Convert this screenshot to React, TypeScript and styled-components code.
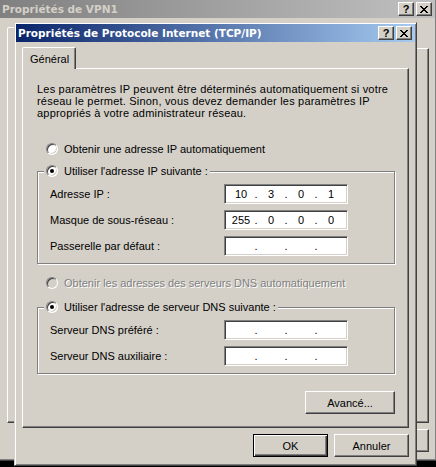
import styled, { createGlobalStyle } from 'styled-components';

const GlobalStyle = createGlobalStyle`
  html, body {
    margin: 0;
    padding: 0;
    background: #000000;
  }
  body {
    font-family: "Liberation Sans", Arial, sans-serif;
    font-size: 11px;
    color: #000000;
  }
`;

const CloseGlyph = () => (
  <svg width="8" height="7" viewBox="0 0 8 7" shapeRendering="crispEdges">
    <path
      fill="#000"
      d="M0 0h2v1H0zM6 0h2v1H6zM1 1h2v1H1zM5 1h2v1H5zM2 2h4v1H2zM3 3h2v1H3zM2 4h4v1H2zM1 5h2v1H1zM5 5h2v1H5zM0 6h2v1H0zM6 6h2v1H6z"
    />
  </svg>
);

const IpField = ({ value }: { value?: string[] }) => {
  const parts = value ?? ['', '', '', ''];
  return (
    <Sunken>
      {parts.map((p, i) => (
        <Octets key={i}>
          <Octet>{p}</Octet>
          {i < 3 && <Dot>.</Dot>}
        </Octets>
      ))}
    </Sunken>
  );
};

const App = () => {
  return (
    <>
      <GlobalStyle />
      <Desktop>
        <Window $left={-2} $top={-2} $width={439} $height={463}>
          <TitleBar $active={false}>
            <TitleText>Propriétés de VPN1</TitleText>
            <CaptionButtons>
              <CaptionButton>?</CaptionButton>
              <CaptionButton>
                <CloseGlyph />
              </CaptionButton>
            </CaptionButtons>
          </TitleBar>
          <Body $top={9} $left={7}>
            <TabStrip>
              <Tab>Général</Tab>
            </TabStrip>
            <Panel />
            <ButtonRow>
              <Button $width={75} $default>
                OK
              </Button>
              <Button $width={75}>Annuler</Button>
            </ButtonRow>
          </Body>
        </Window>

        <Window $left={14} $top={22} $width={403} $height={444}>
          <TitleBar $active>
            <TitleText>Propriétés de Protocole Internet (TCP/IP)</TitleText>
            <CaptionButtons>
              <CaptionButton>?</CaptionButton>
              <CaptionButton>
                <CloseGlyph />
              </CaptionButton>
            </CaptionButtons>
          </TitleBar>
          <Body $top={5} $left={6}>
            <TabStrip>
              <Tab>Général</Tab>
            </TabStrip>
            <Panel>
              <Paragraph>
                Les paramètres IP peuvent être déterminés automatiquement si votre
                <br />
                réseau le permet. Sinon, vous devez demander les paramètres IP
                <br />
                appropriés à votre administrateur réseau.
              </Paragraph>

              <RadioRow $gap={23}>
                <Radio />
                <span>Obtenir une adresse IP automatiquement</span>
              </RadioRow>

              <GroupBox $gap={8}>
                <Legend>
                  <RadioRow $gap={0} $inLegend>
                    <Radio $checked />
                    <span>Utiliser l'adresse IP suivante :</span>
                  </RadioRow>
                </Legend>
                <FieldGrid>
                  <FieldLabel>Adresse IP :</FieldLabel>
                  <IpField value={['10', '3', '0', '1']} />
                  <FieldLabel>Masque de sous-réseau :</FieldLabel>
                  <IpField value={['255', '0', '0', '0']} />
                  <FieldLabel>Passerelle par défaut :</FieldLabel>
                  <IpField />
                </FieldGrid>
              </GroupBox>

              <RadioRow $gap={12} $disabled>
                <Radio $disabled />
                <span>Obtenir les adresses des serveurs DNS automatiquement</span>
              </RadioRow>

              <GroupBox $gap={10}>
                <Legend>
                  <RadioRow $gap={0} $inLegend>
                    <Radio $checked />
                    <span>Utiliser l'adresse de serveur DNS suivante :</span>
                  </RadioRow>
                </Legend>
                <FieldGrid>
                  <FieldLabel>Serveur DNS préféré :</FieldLabel>
                  <IpField />
                  <FieldLabel>Serveur DNS auxiliaire :</FieldLabel>
                  <IpField />
                </FieldGrid>
              </GroupBox>

              <AdvancedButton $width={90}>Avancé...</AdvancedButton>
            </Panel>
            <ButtonRow>
              <Button $width={75} $default>
                OK
              </Button>
              <Button $width={75}>Annuler</Button>
            </ButtonRow>
          </Body>
        </Window>
      </Desktop>
    </>
  );
};

export default App;

// Styled Components
const Desktop = styled.div`
  position: relative;
  width: 436px;
  height: 467px;
  overflow: hidden;
  background: #000000;
`;

const Window = styled.div<{ $left: number; $top: number; $width: number; $height: number }>`
  position: absolute;
  z-index: 0;
  left: ${(p) => p.$left}px;
  top: ${(p) => p.$top}px;
  width: ${(p) => p.$width}px;
  height: ${(p) => p.$height}px;
  box-sizing: border-box;
  display: flex;
  flex-direction: column;
  padding: 1px;
  background: #d4d0c8;
  border: 1px solid;
  border-color: #d4d0c8 #404040 #404040 #d4d0c8;
  box-shadow: inset 1px 1px #ffffff, inset -1px -1px #808080;
`;

const TitleBar = styled.div<{ $active: boolean }>`
  display: flex;
  align-items: center;
  height: 18px;
  flex-shrink: 0;
  padding: 0 3px 0 2px;
  background: ${(p) =>
    p.$active
      ? 'linear-gradient(to right, #0a246a, #a6caf0)'
      : 'linear-gradient(to right, #808080, #c0c0c0)'};
  color: ${(p) => (p.$active ? '#ffffff' : '#d4d0c8')};
  font-family: "DejaVu Sans", Verdana, sans-serif;
  font-size: 10.5px;
  font-weight: bold;
  white-space: nowrap;
`;

const TitleText = styled.div`
  flex: 1;
  overflow: hidden;
`;

const CaptionButtons = styled.div`
  display: flex;
  gap: 2px;
`;

const CaptionButton = styled.div`
  box-sizing: border-box;
  width: 16px;
  height: 14px;
  display: flex;
  align-items: center;
  justify-content: center;
  background: #d4d0c8;
  color: #000000;
  font-family: "Liberation Sans", Arial, sans-serif;
  font-weight: bold;
  font-size: 11px;
  border: 1px solid;
  border-color: #ffffff #404040 #404040 #ffffff;
  box-shadow: inset -1px -1px #808080, inset 1px 1px #d4d0c8;
`;

const Body = styled.div<{ $top: number; $left: number }>`
  flex: 1;
  display: flex;
  flex-direction: column;
  min-height: 0;
  padding: ${(p) => p.$top}px 6px 7px ${(p) => p.$left}px;
`;

const TabStrip = styled.div`
  display: flex;
  height: 21px;
`;

const Tab = styled.div`
  position: relative;
  z-index: 1;
  box-sizing: border-box;
  width: 54px;
  height: 22px;
  display: flex;
  align-items: center;
  padding-left: 7px;
  background: #d4d0c8;
  border: 1px solid;
  border-bottom: none;
  border-color: #ffffff #404040 transparent #ffffff;
  border-top-left-radius: 2px;
  border-top-right-radius: 2px;
  box-shadow: inset -1px 0 #808080;
`;

const Panel = styled.div`
  flex: 1;
  display: flex;
  flex-direction: column;
  min-height: 0;
  padding: 14px 13px 13px 14px;
  border: 1px solid;
  border-color: #ffffff #404040 #404040 #ffffff;
  box-shadow: inset -1px -1px #808080;
`;

const Paragraph = styled.p`
  margin: 0;
  line-height: 12px;
  white-space: nowrap;
  letter-spacing: 0.2px;
`;

const RadioRow = styled.div<{ $gap: number; $disabled?: boolean; $inLegend?: boolean }>`
  display: flex;
  align-items: center;
  gap: 6px;
  height: 14px;
  margin-top: ${(p) => p.$gap}px;
  padding-left: ${(p) => (p.$inLegend ? 0 : 9)}px;
  white-space: nowrap;
  color: ${(p) => (p.$disabled ? '#808080' : '#000000')};
  text-shadow: ${(p) => (p.$disabled ? '1px 1px #ffffff' : 'none')};
`;

const Radio = styled.span<{ $checked?: boolean; $disabled?: boolean }>`
  position: relative;
  box-sizing: border-box;
  width: 12px;
  height: 12px;
  flex-shrink: 0;
  border-radius: 50%;
  background: ${(p) => (p.$disabled ? '#d4d0c8' : '#ffffff')};
  border: 1px solid;
  border-color: #808080 #ffffff #ffffff #808080;
  box-shadow: inset 1px 1px #404040, inset -1px -1px #d4d0c8;

  &::after {
    content: '';
    display: ${(p) => (p.$checked ? 'block' : 'none')};
    position: absolute;
    left: 3px;
    top: 3px;
    width: 4px;
    height: 4px;
    border-radius: 50%;
    background: #000000;
  }
`;

const GroupBox = styled.fieldset<{ $gap: number }>`
  margin: ${(p) => p.$gap}px 0 0;
  padding: 6px 0 7px;
  min-width: 0;
  border: 1px solid #808080;
  box-shadow: inset 1px 1px #ffffff, 1px 1px #ffffff;
`;

const Legend = styled.legend`
  margin-left: 6px;
  padding: 0 2px;
  background: #d4d0c8;
`;

const FieldGrid = styled.div`
  display: grid;
  grid-template-columns: 174px 124px;
  grid-auto-rows: 20px;
  row-gap: 6px;
  align-items: center;
  padding-left: 12px;
`;

const FieldLabel = styled.span`
  white-space: nowrap;
`;

const Sunken = styled.div`
  box-sizing: border-box;
  width: 124px;
  height: 20px;
  display: flex;
  align-items: center;
  padding-left: 3px;
  background: #ffffff;
  border: 1px solid;
  border-color: #808080 #ffffff #ffffff #808080;
  box-shadow: inset 1px 1px #404040, inset -1px -1px #d4d0c8;
`;

const Octets = styled.span`
  display: flex;
`;

const Octet = styled.span`
  width: 26px;
  text-align: center;
`;

const Dot = styled.span`
  width: 4px;
  text-align: center;
`;

const Button = styled.button<{ $width: number; $default?: boolean }>`
  box-sizing: border-box;
  width: ${(p) => p.$width}px;
  height: 23px;
  padding: 0;
  font: inherit;
  color: #000000;
  background: #d4d0c8;
  border: 1px solid;
  border-color: ${(p) => (p.$default ? '#000000' : '#ffffff #404040 #404040 #ffffff')};
  box-shadow: ${(p) =>
    p.$default
      ? 'inset 1px 1px #ffffff, inset -1px -1px #404040, inset -2px -2px #808080'
      : 'inset -1px -1px #808080, inset 1px 1px #d4d0c8'};
`;

const AdvancedButton = styled(Button)`
  align-self: flex-end;
  margin-top: 17px;
`;

const ButtonRow = styled.div`
  display: flex;
  justify-content: flex-end;
  gap: 6px;
  margin-top: 6px;
`;
